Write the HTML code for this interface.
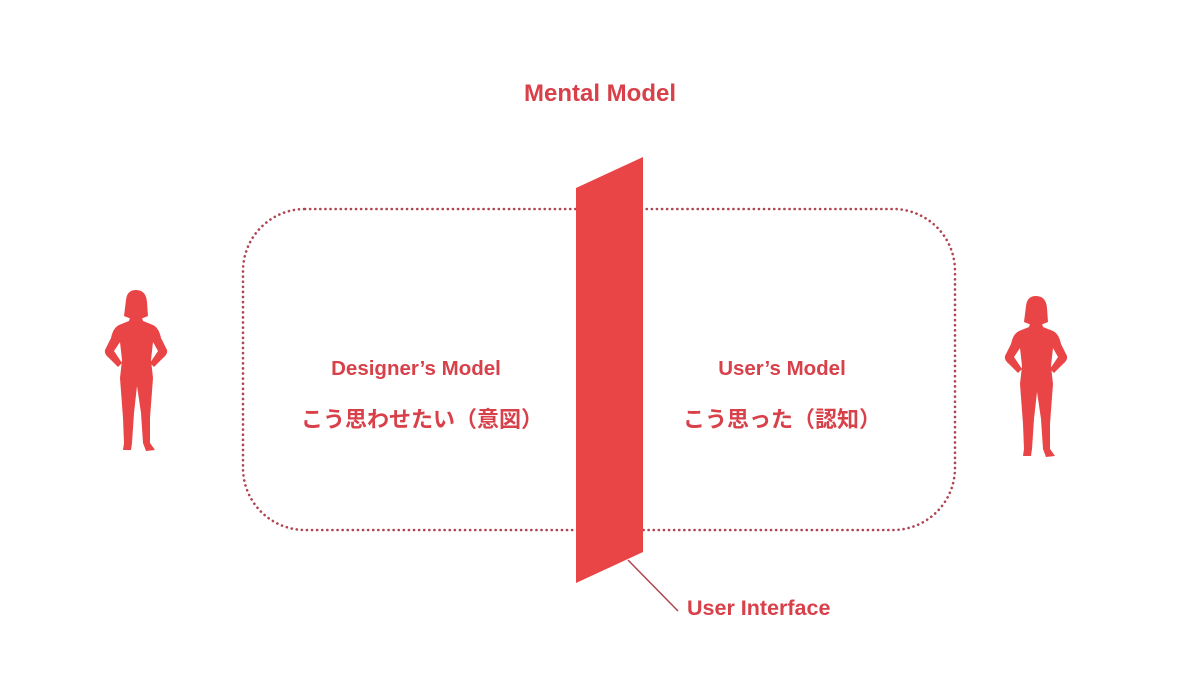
<!DOCTYPE html>
<html><head><meta charset="utf-8"><style>
html,body{margin:0;padding:0;background:#fff;}
body{width:1200px;height:675px;position:relative;overflow:hidden;font-family:"Liberation Sans","Noto Sans CJK JP",sans-serif;}
.t{position:absolute;color:#d8404a;font-weight:bold;white-space:nowrap;text-align:center;}
</style></head><body>
<svg width="1200" height="675" style="position:absolute;left:0;top:0">
<defs>
<g id="fig" fill="#e94446">
<circle cx="33" cy="15" r="10"/>
<path d="M23,12 Q24,2 33,2 Q43,2 44,14 L45,28 L40,30 L26,30 L21,28 Z"/>
<path d="M28,26 L38,26 L40,33 L50,37 Q56,40 58,50 L64,62 Q65,66 60,70 L51,79 L47,75 L55,63 L50,54 L48,72 L50,90 L47,130 L47,155 L52,162 L43,163 L40,155 L38,125 L34,98 L31,125 L29,155 L28,162 L20,162 L21,155 L20,130 L17,90 L19,72 L17,54 L11,63 L19,75 L15,79 L6,70 Q1,66 2,62 L8,50 Q10,40 16,37 L26,33 Z"/>
</g>
</defs>
<rect x="243" y="209" width="712" height="321" rx="62" ry="62" fill="none" stroke="#b04452" stroke-width="2.6" stroke-dasharray="0.1 5" stroke-linecap="round"/>
<polygon points="576,188 643,157 643,552 576,583" fill="#e94446"/>
<line x1="628" y1="560" x2="678" y2="611" stroke="#b04452" stroke-width="1.5"/>
<use href="#fig" transform="translate(103,288)"/>
<use href="#fig" transform="translate(1003,294)"/>
</svg>
<div class="t" style="left:450px;width:300px;top:80px;font-size:24px;">Mental Model</div>
<div class="t" style="left:266px;width:300px;top:357px;font-size:20.5px;">Designer’s Model</div>
<div class="t" style="left:632px;width:300px;top:357px;font-size:20.5px;">User’s Model</div>
<div class="t" style="left:272px;width:300px;top:402px;font-size:22px;">こう思わせたい（意図）</div>
<div class="t" style="left:632px;width:300px;top:402px;font-size:22px;">こう思った（認知）</div>
<div class="t" style="left:687px;top:596px;font-size:21.5px;text-align:left;">User Interface</div>
</body></html>
